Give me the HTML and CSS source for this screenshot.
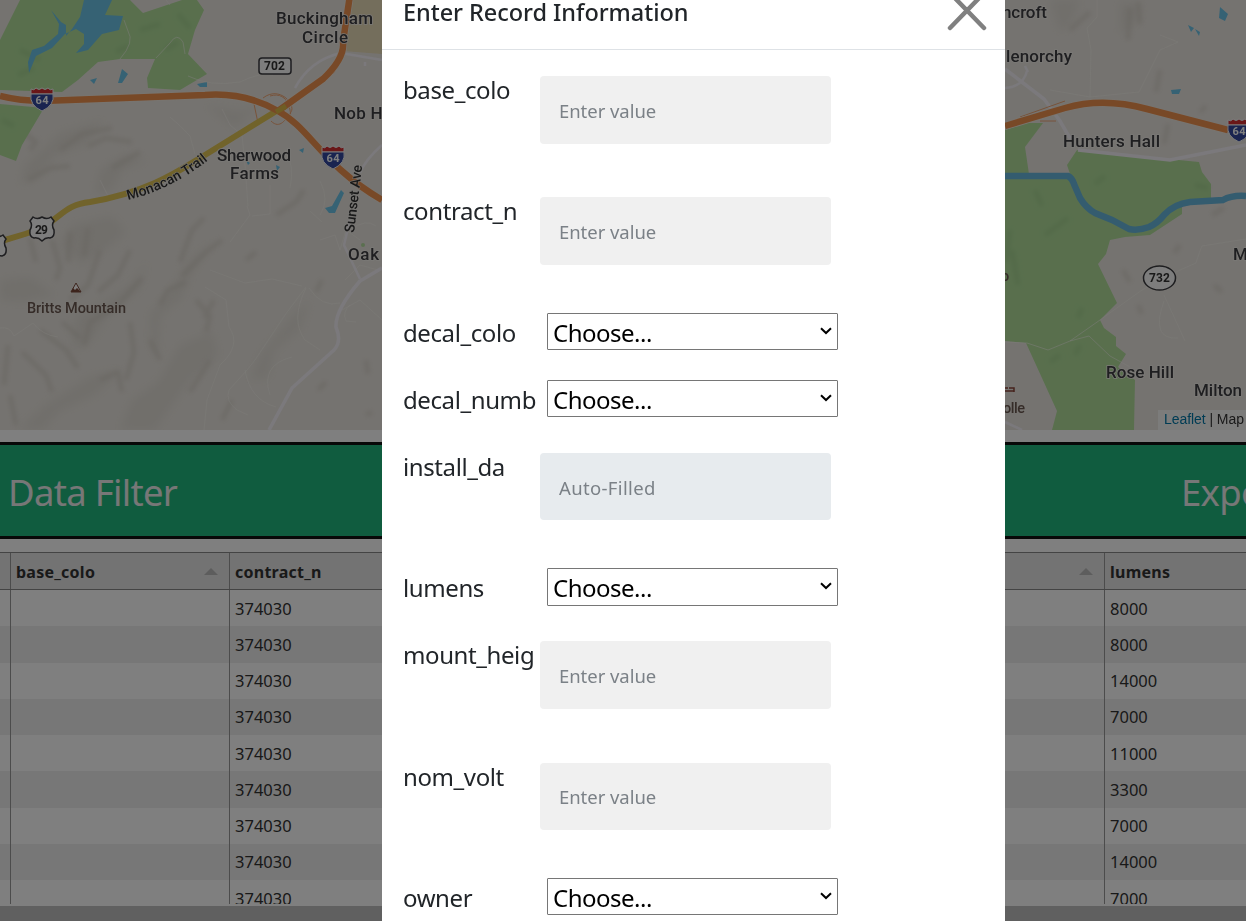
FILE: index.html
```html
<!DOCTYPE html>
<html lang="en">
<head>
<meta charset="utf-8">
<title>Enter Record Information</title>
<link rel="stylesheet" href="styles.css">
</head>
<body>
<div class="page">
  <svg class="map" viewBox="0 0 1246 430" width="1246" height="430">
    <defs>
      <filter id="soft" x="-20%" y="-20%" width="140%" height="140%"><feGaussianBlur stdDeviation="5"/></filter>
      <filter id="softer" x="-20%" y="-20%" width="140%" height="140%"><feGaussianBlur stdDeviation="2"/></filter>
      <g id="interstate">
        <path d="M-11-9Q-8-7-6-10Q-3-7 0-10Q3-7 6-10Q8-7 11-9L11-4H-11Z" fill="#d52f31" stroke="#f4f4f4" stroke-width="1"/>
        <path d="M-11-4H11Q13 7 0 13Q-13 7-11-4Z" fill="#3449a0" stroke="#f4f4f4" stroke-width="1"/>
        <text class="shield-light" x="0" y="6" text-anchor="middle" textLength="13">64</text>
      </g>
      <path id="us-shield" d="M-9-12Q-5-9 0-12Q5-9 9-12L12-8Q9-4 12 1Q13 8 8 9Q4 8 0 12Q-4 8-8 9Q-13 8-12 1Q-9-4-12-8Z"/>
    </defs>
    <rect width="1246" height="430" fill="#ebe7e1"/>
    <!-- terrain shading -->
    <g class="hills" filter="url(#soft)">
      <path d="M18 430L45 405L90 377L122 369L95 395L58 412L43 430Z" fill="#d1c9b9"/>
      <path d="M120 430L132 400L158 382L180 345L212 332L218 355L190 380L165 415L155 430Z"/>
      <path d="M88 345L108 315L140 288L148 260L134 282L104 302L76 315L72 350Z"/>
      <path d="M158 355L160 315L180 300L193 270L215 240L190 260L170 292L150 314L151 350Z"/>
      <path d="M25 165L60 133L105 120L85 145L55 155L38 178L20 185Z"/>
      <path d="M250 380L260 355L290 318L310 300L300 330L275 350L268 378Z"/>
      <path d="M0 280L30 277L55 295L22 302L0 300Z"/>
      <path d="M100 170L125 155L148 160L122 170L112 190L95 195Z"/>
      <path d="M60 245L72 225L112 216L126 232L107 248L82 264Z"/>
      <path d="M1050 0L1080 0L1070 25L1060 32ZM1120 2L1142 5L1138 20L1120 35Z"/>
      <path d="M205 105L240 112L260 103L235 128Z"/>
    </g>
    <g class="ridges" filter="url(#softer)">
      <path d="M30 238L36 262M52 240L60 268L56 280M70 232L68 262M88 228L84 256M100 250L88 285L70 300M130 250L118 275L98 292M142 278L118 305L90 322L84 345M130 322L134 352L126 380M8 345L4 385M22 352L46 375L52 392M40 330L66 350L78 368M62 322L80 338M10 395L16 425M100 380L118 372L122 392M150 340L160 360M160 305L168 290L186 282M180 262L192 230L204 218M182 276L206 252L222 240M196 300L210 316L206 332M214 300L204 318M60 150L82 134L112 128M28 180L50 168L70 166M88 146L106 138L132 142M112 168L140 152M20 130L36 142L30 150M276 215L296 202L304 190M322 280L316 292M246 260L256 252M210 360L190 392M232 400L222 420M326 382L318 390M366 360L368 374M366 415L372 412"/>
      <path d="M1090 12L1070 30M1130 8L1128 40M1138 2L1140 24M1160 70L1156 92M1206 106L1200 112M1168 124L1164 144M1123 270L1130 282M1138 305L1142 314M1212 215L1224 208M1214 285L1222 292M1174 253L1180 245"/>
    </g>
    <path d="M350 0H382V54L343 51L350 20Z" fill="#e8dcb9"/>
    <!-- parkland -->
    <g class="park">
      <path d="M20 0H130L143 13L182 0H197L204 10L195 30L188 54L207 74L180 90L148 88L147 78L155 59L120 59L98 62L78 80L62 92L0 90V40Z"/>
      <path d="M0 104L44 108L22 145L16 161L0 155Z"/>
      <path d="M1005 130L1027 123L1043 123L1025 147L1029 174H1005Z"/>
      <path d="M1005 174H1070L1067 165L1077 150L1199 162L1202 172L1211 184V198L1182 204V214L1150 235L1125 237L1110 240L1106 254L1098 264L1117 303L1100 320L1104 328L1116 337V346L1126 354L1118 367L1135 380L1134 430H1052L1057 411L1026 343L1005 341Z"/>
    </g>
    <g class="park-shade" filter="url(#softer)">
      <path d="M20 50L40 60M18 75L34 68M140 30L160 24M165 50L178 42M128 46L116 52M2 120L14 126M178 14L190 28M1035 190L1042 206M1045 235L1068 218M1012 250L1018 285M1010 230L1006 262M1082 308L1078 318M1050 362L1060 355M1075 355L1080 345M1195 185L1208 188M1105 176L1095 184"/>
    </g>
    <path class="water" d="M51 10L61 22L66 25V36L72 29L80 17L84 0H112L105 15L123 16L119 30L102 34L88 50L76 53L84 44L84 34L76 29L65 34L52 48L36 56L29 73L28 62L32 50L44 46L58 34L59 24Z"/>
    <path class="water" d="M90 80L97 78L94 84ZM122 69L128 74L122 83H118ZM197 84L207 82V87H200ZM341 190L344 193L335 213L329 213L325 208L332 206ZM299 150L304 148L303 153ZM276 165L280 167L277 171ZM246 160L250 163L248 165ZM1220 7L1228 14L1225 21L1219 18ZM1188 25L1194 28L1191 32ZM1195 29L1200 32L1199 36ZM1171 90L1181 89L1179 94H1172Z"/>
    <path class="river" d="M1005 176H1068Q1072 178 1074 184L1080 198Q1086 208 1095 213L1112 220L1129 229Q1138 231 1149 227Q1158 223 1164 215Q1174 204 1190 202L1223 200Q1232 195 1246 196"/>
    <!-- local roads -->
    <g class="lane">
      <path d="M120 59Q135 42 128 31L124 20M156 58L170 43Q177 32 183 42L185 54M188 76Q210 87 240 82Q260 72 273 75M166 0L170 5M0 328Q10 326 14 336L33 323Q42 335 58 337M210 270L245 283L272 279L302 286M306 287L285 315L255 360L247 370L229 390Q225 401 237 410L248 415M245 370Q250 400 276 407M306 288Q290 320 305 340L320 350M270 395Q260 365 292 357M309 288Q322 308 340 303M170 117Q180 125 190 136L195 154M100 180L108 196M204 430L207 400L220 365Q242 345 229 327L226 300L205 287M222 109L230 125L242 135L245 165L248 206M285 150Q295 165 290 188M320 181Q330 200 320 215M320 240L335 235L340 250L346 230L360 240M345 280L360 265L378 270M342 310L360 300L382 320M350 230Q366 218 376 226M310 211L322 222M356 322L346 321Q342 312 350 305M1097 0V17L1087 28L1091 50L1090 97M1160 35L1178 42L1160 50L1145 80L1139 92L1090 97L1050 90M1070 341L1100 320L1142 290L1180 270L1196 263Q1200 250 1202 246L1246 239M1164 295L1180 330L1185 341M1164 301Q1150 340 1178 338M1005 342L1027 343L1048 350L1070 341L1089 336L1110 356L1130 367M247 206L250 215L230 242M270 185L270 214L252 216"/>
    </g>
    <g class="street">
      <path d="M295 88Q310 60 341 53L382 60M382 145Q365 160 360 173M365 62V66M350 220L344 245L360 279"/>
      <path class="avenue" d="M382 268L360 281Q335 310 336 327Q342 342 334 350L292 388L269 430"/>
      <path class="avenue" d="M1005 69L1044 99L1060 121L1071 140M1078 150L1170 160L1246 145"/>
      <path d="M1005 88Q1023 87 1027 71M1025 66L1028 72M1005 422L1022 430"/>
    </g>
    <!-- highways -->
    <g class="ramp"><path d="M254 104L258 123M263 98C280 85 296 105 291 112S280 130 271 121M270 96C290 90 292 115 290 122M1020 117L1065 101M1040 121H1056M343 54Q340 66 333 74"/></g>
    <g class="casing"><path d="M0 96Q20 101 42 101L205 95Q245 92 278 111C310 128 322 165 382 200M278 111L323 79Q345 58 343 42L350-5M1005 126L1065 108Q1103 97 1147 109L1226 130"/></g>
    <path class="yellow" d="M-5 243L25 234C60 224 60 205 90 202C150 192 180 170 205 155L278 110"/>
    <path class="orange" d="M0 96Q20 101 42 101L205 95Q245 92 278 111C310 128 322 165 382 200M278 111L323 79Q345 58 343 42L350-5M1005 126L1065 108Q1103 97 1147 109L1228 130"/>
    <path d="M276 112L286 106" stroke="#dfba48" stroke-width="5"/>
    <use href="#interstate" x="42" y="98"/><use href="#interstate" x="333" y="156"/><use href="#interstate" x="1239" y="129"/>
    <use href="#us-shield" class="badge" x="42" y="229"/><use href="#us-shield" class="badge" x="-6" y="247"/>
    <rect class="badge" x="259" y="58" width="32" height="16" rx="3"/>
    <ellipse class="badge" cx="1159.500" cy="278" rx="16" ry="12"/>
    <text class="shield-dark" x="35" y="234" textLength="13">29</text>
    <text class="shield-dark" x="264" y="70" textLength="21">702</text>
    <text class="shield-dark" x="1149" y="282" textLength="21">732</text>
    <!-- place names -->
    <g class="place">
      <text x="276" y="24" textLength="97">Buckingham</text><text x="302" y="43" textLength="46">Circle</text>
      <text x="334" y="119" textLength="53">Nob Hi</text>
      <text x="217" y="161" textLength="74">Sherwood</text><text x="230" y="179" textLength="49">Farms</text>
      <text x="348" y="260" textLength="31">Oak</text>
      <text x="1002" y="18" textLength="45">ncroft</text><text x="1006" y="62" textLength="66">lenorchy</text>
      <text x="1063" y="147" textLength="97">Hunters Hall</text><text x="1233" y="260">M</text>
      <text x="1106" y="378" textLength="68">Rose Hill</text><text x="1194" y="396" textLength="48">Milton</text>
    </g>
    <path id="trail" d="M128 200Q180 187 220 150" fill="none"/>
    <text class="road-name"><textPath href="#trail" textLength="90">Monacan Trail</textPath></text>
    <text class="road-name" transform="translate(354 233) rotate(-83)" textLength="68">Sunset Ave</text>
    <text class="peak" x="27" y="313" textLength="99">Britts Mountain</text>
    <text class="peak" x="1003" y="413" textLength="22">olle</text><text class="peak" x="1001" y="281">o</text>
    <path d="M76 283L81 292H71Z" fill="#fff" stroke="#7b4939"/><path d="M73 288L75 290L77 288L79 290L81 292H71Z" fill="#7b4939"/>
    <path d="M1003 391H1014M1005 388H1008M1009 388H1014V392" stroke="#8c4638" stroke-width="1.500" fill="none"/>
    <circle cx="363" cy="245" r="2" fill="#b4dfa0"/>
    <rect x="1158" y="410" width="88" height="20" fill="#fff" fill-opacity=".7"/>
    <text class="credit" x="1164" y="424" textLength="80"><tspan fill="#0078a8">Leaflet</tspan> | Map</text>
  </svg>

  <div class="toolbar"><span>Data Filter</span><span class="export">Export</span></div>

  <div class="grid">
    <div class="record head"><span></span><span>base_colo<i class="sort"></i></span><span>contract_n</span><span><i class="sort"></i></span><span>lumens</span></div>
    <div class="record"><span></span><span></span><span>374030</span><span></span><span>8000</span></div>
    <div class="record"><span></span><span></span><span>374030</span><span></span><span>8000</span></div>
    <div class="record"><span></span><span></span><span>374030</span><span></span><span>14000</span></div>
    <div class="record"><span></span><span></span><span>374030</span><span></span><span>7000</span></div>
    <div class="record"><span></span><span></span><span>374030</span><span></span><span>11000</span></div>
    <div class="record"><span></span><span></span><span>374030</span><span></span><span>3300</span></div>
    <div class="record"><span></span><span></span><span>374030</span><span></span><span>7000</span></div>
    <div class="record"><span></span><span></span><span>374030</span><span></span><span>14000</span></div>
    <div class="record"><span></span><span></span><span>374030</span><span></span><span>7000</span></div>
  </div>
  <div class="scrollbar"></div>
</div>

<div class="backdrop">
  <div class="dialog">
    <div class="dialog-head">
      <h1>Enter Record Information</h1>
      <svg class="close" viewBox="0 0 40 40" width="40" height="40"><path d="M3 2L37 37M37 2L3 37"/></svg>
    </div>
    <form class="fields">
      <div class="field tall"><label>base_colo</label><input placeholder="Enter value"></div>
      <div class="field tall"><label>contract_n</label><input placeholder="Enter value"></div>
      <div class="field"><label>decal_colo</label><div class="choice"><span>Choose...</span><svg viewBox="0 0 12 8" width="12" height="8"><path d="M1 1.200L6 6L11 1.200"/></svg></div></div>
      <div class="field"><label>decal_numb</label><div class="choice"><span>Choose...</span><svg viewBox="0 0 12 8" width="12" height="8"><path d="M1 1.200L6 6L11 1.200"/></svg></div></div>
      <div class="field tall"><label>install_da</label><input class="auto" placeholder="Auto-Filled" disabled></div>
      <div class="field"><label>lumens</label><div class="choice"><span>Choose...</span><svg viewBox="0 0 12 8" width="12" height="8"><path d="M1 1.200L6 6L11 1.200"/></svg></div></div>
      <div class="field tall"><label>mount_heig</label><input placeholder="Enter value"></div>
      <div class="field tall"><label>nom_volt</label><input placeholder="Enter value"></div>
      <div class="field"><label>owner</label><div class="choice"><span>Choose...</span><svg viewBox="0 0 12 8" width="12" height="8"><path d="M1 1.200L6 6L11 1.200"/></svg></div></div>
    </form>
  </div>
</div>
</body>
</html>
```

FILE: styles.css
```css
* { box-sizing: border-box; }
html, body { margin: 0; height: 921px; overflow: hidden; }
body { font-family: "Noto Sans", "Open Sans", sans-serif; color: #212529; background: #fff; }
.page { width: 1246px; height: 921px; overflow: hidden; display: flex; flex-direction: column; }

.map { display: block; flex: none; }
.hills path { fill: #d9d5cc; opacity: .5; }
.ridges path { fill: none; stroke: #d3cfc5; stroke-width: 5; stroke-linejoin: round; opacity: .6; }
.park { fill: #b2df9b; }
.park-shade path { fill: none; stroke: #a3d08e; stroke-width: 5; opacity: .7; }
.water { fill: #6cc4e8; }
.river { fill: none; stroke: #69b8de; stroke-width: 6.500; }
.lane { fill: none; stroke: #f8f5ef; stroke-width: 1; opacity: .55; }
.street { fill: none; stroke: #f6f3f9; stroke-width: 2.500; }
.avenue { stroke-width: 3.500; }
.ramp { fill: none; stroke: #f0a674; stroke-width: 1; }
.casing { fill: none; stroke: #f2e9de; stroke-width: 8; }
.orange { fill: none; stroke: #f0924f; stroke-width: 6.500; }
.yellow { fill: none; stroke: #e2c657; stroke-width: 6; }
.badge { fill: #fafafa; stroke: #3c3c40; stroke-width: 1.500; }
.map text { font-family: Roboto, sans-serif; }
.shield-light { font-size: 11px; font-weight: 700; fill: #fff; }
.shield-dark { font-size: 12px; font-weight: 700; fill: #333; }
.place { font-size: 17px; font-weight: 500; fill: #3e3e42; stroke: #f4f1ec; stroke-width: 1.500; paint-order: stroke; }
.road-name { font-size: 14px; font-weight: 500; fill: #333; stroke: #f0ede8; stroke-width: 1; paint-order: stroke; }
.peak { font-size: 14.500px; font-weight: 500; fill: #6b5850; }
.map .credit { font-family: "Liberation Sans", Arial, sans-serif; font-size: 14px; fill: #333; }

.toolbar { flex: none; margin-top: 12px; height: 97px; display: flex; justify-content: space-between; align-items: center; padding: 2px 0 0 8px; border: solid #111; border-width: 3px 0; background: #20b87f; color: #eee; font-size: 36.500px; letter-spacing: -.7px; white-space: nowrap; }
.export { width: 65px; }

.grid { flex: none; margin-top: 13px; height: 352px; overflow: hidden; border-top: 1px solid #888; font-size: 16.500px; color: #333; }
.record { display: grid; grid-template-columns: 11px 219px 200px 675px 142px; height: 36.270px; }
.record span { display: flex; align-items: center; justify-content: space-between; padding: 0 5px; border-right: 1px solid #999; }
.record span:nth-child(3) { border-right: 0; }
.record:nth-child(odd) { background: #efefef; }
.record.head { height: 37px; background: #e6e6e6; border-bottom: 1px solid #888; font-weight: 700; font-size: 16px; letter-spacing: .25px; }
.record.head span { padding-top: 1px; }
.sort { margin: 0 6px 0 auto; border: solid transparent; border-width: 0 7px 7px; border-bottom-color: #bbb; }
.scrollbar { flex: none; height: 16px; margin-top: 2px; background: #c1c1c1; }

.backdrop { position: absolute; inset: 0; height: 921px; overflow: hidden; background: rgba(0, 0, 0, .5); }
.dialog { width: 623px; height: 921px; margin-left: 382px; background: #fff; overflow: hidden; }
.dialog-head { height: 50px; display: flex; justify-content: space-between; padding: 0 18px 0 21px; border-bottom: 1px solid #dee2e6; }
.dialog-head h1 { margin: -5px 0 0; font-size: 23.500px; line-height: 34px; font-weight: 500; letter-spacing: -.05px; white-space: nowrap; }
.close { margin-top: -9px; fill: none; stroke: #808080; stroke-width: 4.500; stroke-linecap: round; }

.fields { padding: 26px 0 0 21px; }
.field { height: 67px; display: grid; grid-template-columns: 137px 291px; align-items: start; }
.field.tall { height: 121.400px; }
.field label { margin-top: -1px; font-size: 24px; line-height: 30px; letter-spacing: -.4px; white-space: nowrap; }
.field input { width: 291px; height: 67.500px; padding: 1px 18px 0 19px; border: 0; border-radius: 4px; background: #f0f0f0; font: 18.500px "Noto Sans", sans-serif; letter-spacing: -.05px; }
.field .auto { letter-spacing: .35px; }
.field input::placeholder { color: #7b8187; opacity: 1; }
.field input:disabled { background: #e7ebee; }
.choice { height: 37.500px; margin: -6px -7px 0 7px; display: flex; align-items: center; justify-content: space-between; padding: 2px 5px 0; border: 1px solid #767676; border-radius: 1px; color: #000; font-size: 24px; line-height: 32px; letter-spacing: -.5px; }
.choice svg { margin-top: -3px; fill: none; stroke: #000; stroke-width: 2; }
```
